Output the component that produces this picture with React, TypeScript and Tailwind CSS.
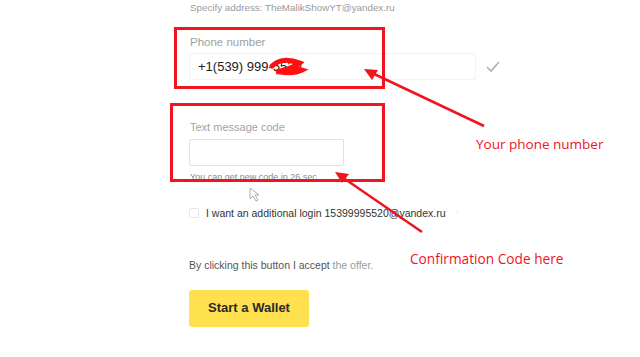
import React from "react";

const App = () => {
  return (
    <div className="relative h-[357px] w-[640px] overflow-hidden bg-white font-['Liberation_Sans',Arial,sans-serif]">
      <div className="flex flex-col pl-[189px]">
        <div className="mt-[2px] pl-[1px] text-[9.8px] leading-[12px] text-[#9a9a9a]">
          Specify address: TheMalikShowYT@yandex.ru
        </div>

        <div className="mt-[21px] pl-[1px] text-[11.5px] leading-[14px] text-[#a0a0a0]">Phone number</div>
        <div className="mt-[4px] flex items-center">
          <div className="flex h-[27px] w-[287px] items-center rounded-[2px] border border-[#f2f2f2] pl-[8px] text-[13px] font-medium text-[#222]">
            +1(539) 999-5520
          </div>
          <svg width="14" height="12" viewBox="0 0 14 12" className="ml-[10px]">
            <polyline points="1,6 5,10 13,1" fill="none" stroke="#a9b0ad" strokeWidth="1.6" />
          </svg>
        </div>

        <div className="mt-[40px] pl-[1px] text-[11px] leading-[14px] text-[#a3a3a3]">Text message code</div>
        <div className="mt-[5px] h-[27px] w-[155px] rounded-[2px] border border-[#ece8a4] bg-white" />
        <div className="mt-[6px] pl-[1px] text-[9px] leading-[10px] text-[#8a8a8a]">
          You can get new code in 26 sec.
        </div>

        <div className="mt-[24px] flex items-center">
          <div className="h-[10px] w-[10px] rounded-[2px] border border-[#e6e6e6]" />
          <span className="ml-[7px] text-[10.5px] leading-[12px] text-[#333]">
            I want an additional login 15399995520@yandex.ru
          </span>
          <span className="ml-[10px] text-[9px] text-[#ccc]">·</span>
        </div>

        <div className="mt-[39px] text-[10.5px] leading-[12px] text-[#555]">
          By clicking this button I accept <span className="text-[#9a9a9a]">the offer.</span>
        </div>

        <button className="mt-[19px] flex h-[37px] w-[120px] items-center justify-center rounded-[3px] bg-[#ffe14f] text-[13px] font-bold text-[#2a2a2a]">
          Start a Wallet
        </button>
      </div>

      {/* annotations */}
      <div className="absolute left-[174px] top-[27px] h-[62px] w-[211px] border-[3px] border-[#f0141e]" />
      <div className="absolute left-[170px] top-[103px] h-[79px] w-[215px] border-[3px] border-[#f0141e]" />

      <svg className="absolute left-0 top-0" width="640" height="357" viewBox="0 0 640 357">
        <path d="M272 66 C280 58, 292 60, 300 63 C296 67, 284 70, 276 72 C286 70, 296 68, 302 70 C296 73, 286 73, 280 72" fill="none" stroke="#ff1010" strokeWidth="5" strokeLinecap="round" />
        <line x1="484" y1="126" x2="372" y2="73" stroke="#f0141e" strokeWidth="2.5" />
        <polygon points="364,69 378,70 372,80" fill="#f0141e" />
        <line x1="422" y1="232" x2="342" y2="177" stroke="#f0141e" strokeWidth="2.5" />
        <polygon points="335,172 349,174 342,183" fill="#f0141e" />
        <path d="M250 188 L250 199 L253 196 L256 201 L258 200 L255 195 L259 195 Z" fill="#fff" stroke="#999" strokeWidth="0.8" />
      </svg>

      <div className="absolute left-[476px] top-[134px] font-['Open_Sans',sans-serif] text-[13.5px] leading-[20px] text-[#f0141e]">
        Your phone number
      </div>
      <div className="absolute left-[410px] top-[249px] font-['Open_Sans',sans-serif] text-[13.7px] leading-[20px] text-[#f0141e]">
        Confirmation Code here
      </div>
    </div>
  );
};

export default App;
